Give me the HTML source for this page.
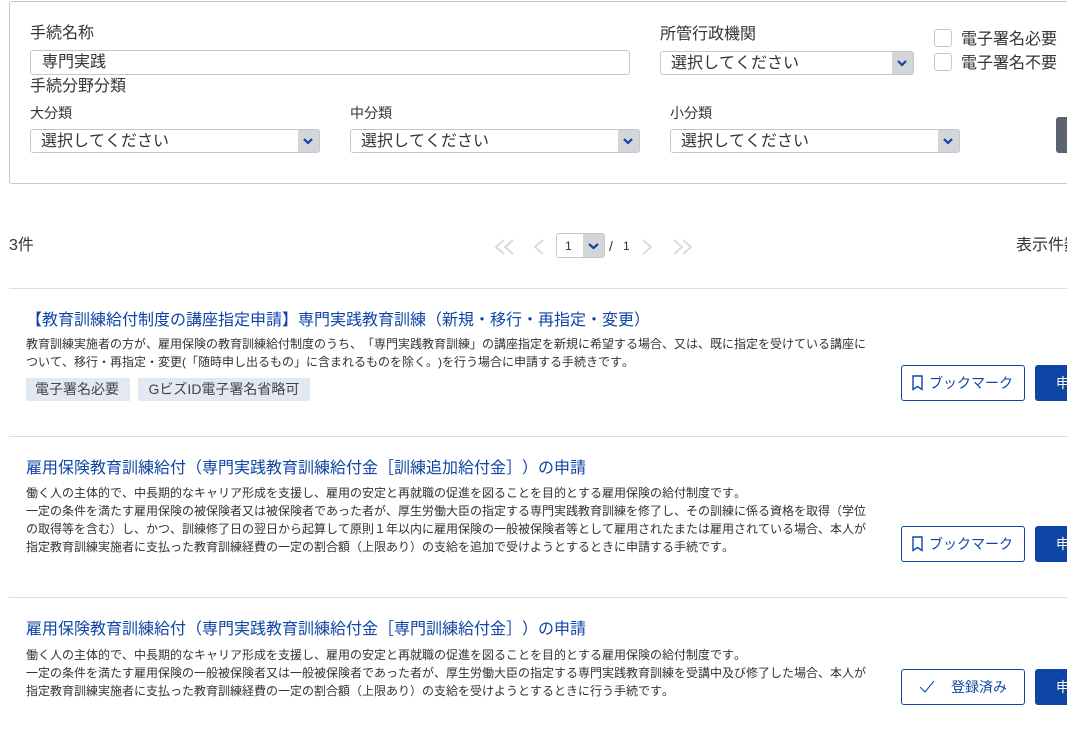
<!DOCTYPE html>
<html lang="ja"><head><meta charset="utf-8"><title>手続検索</title>
<style>
html,body{margin:0;padding:0;background:#fff}
#p{position:relative;width:1067px;height:737px;overflow:hidden;background:#fff;font-family:"Liberation Sans","Noto Sans CJK JP",sans-serif;color:#333;text-spacing-trim:space-all;font-kerning:none}
.t{position:absolute;white-space:nowrap;line-height:20px;font-size:16px}
.s{font-size:14px}
.d{font-size:12px;line-height:18px}
.a{color:#0f46a5}
.box{position:absolute;box-sizing:border-box;border:1px solid #c6c6d2;border-radius:3px;background:#fff}
.sel{height:24px;overflow:hidden;font-size:16px;line-height:23px;padding-left:10px;white-space:nowrap}
.sel i{position:absolute;right:0;top:0;bottom:0;width:21px;background:#d4d5d8}
.sel svg{position:absolute;right:5px;top:7px}
.hr{position:absolute;left:9px;right:0;height:1px;background:#dcdcdc}
.tag{position:absolute;height:23px;background:#e3e9f3;font-size:14px;line-height:23px;text-align:center;white-space:nowrap;color:#444}
.btn{position:absolute;box-sizing:border-box;left:901px;width:124px;height:36px;border:1px solid #0f46a5;border-radius:3px;color:#0f46a5;font-size:14px;line-height:35px;background:#fff;white-space:nowrap}
.go{position:absolute;left:1035px;width:60px;height:36px;background:#0f46a5;border-radius:3px;color:#fff;font-size:14px;line-height:36px;padding-left:21px;box-sizing:border-box;white-space:nowrap}
</style></head><body><div id="p">

<div class="box" style="left:9px;top:1px;width:1100px;height:183px;border-color:#c8c8d4"></div>

<div class="t" style="left:30px;top:24px">手続名称</div>
<div class="box" style="left:30px;top:50px;width:600px;height:25px;font-size:16px;line-height:23px;padding-left:11px">専門実践</div>
<div class="t" style="left:30px;top:77px">手続分野分類</div>

<div class="t" style="left:660px;top:25px">所管行政機関</div>
<div class="box sel" style="left:660px;top:51px;width:254px">選択してください<i></i><svg width="12" height="9" viewBox="0 0 12 9"><path d="M2 2l4 4 4-4" fill="none" stroke="#0f46a5" stroke-width="2.2"/></svg></div>

<div class="box" style="left:934px;top:29px;width:18px;height:18px"></div>
<div class="box" style="left:934px;top:53px;width:18px;height:18px"></div>
<div class="t" style="left:961px;top:30px">電子署名必要</div>
<div class="t" style="left:961px;top:54px">電子署名不要</div>

<div class="t s" style="left:30px;top:103px">大分類</div>
<div class="t s" style="left:350px;top:103px">中分類</div>
<div class="t s" style="left:670px;top:103px">小分類</div>
<div class="box sel" style="left:30px;top:129px;width:290px">選択してください<i></i><svg width="12" height="9" viewBox="0 0 12 9"><path d="M2 2l4 4 4-4" fill="none" stroke="#0f46a5" stroke-width="2.2"/></svg></div>
<div class="box sel" style="left:350px;top:129px;width:290px">選択してください<i></i><svg width="12" height="9" viewBox="0 0 12 9"><path d="M2 2l4 4 4-4" fill="none" stroke="#0f46a5" stroke-width="2.2"/></svg></div>
<div class="box sel" style="left:670px;top:129px;width:290px">選択してください<i></i><svg width="12" height="9" viewBox="0 0 12 9"><path d="M2 2l4 4 4-4" fill="none" stroke="#0f46a5" stroke-width="2.2"/></svg></div>
<div style="position:absolute;left:1056px;top:117px;width:40px;height:36px;background:#5b6270;border-radius:3px"></div>

<div class="t" style="left:9px;top:236px">3件</div>
<svg style="position:absolute;left:490px;top:235px" width="210" height="24" viewBox="0 0 210 24" fill="none" stroke="#d3d8d8" stroke-width="1.8">
<path d="M14 5l-8 7 8 7M23 5l-8 7 8 7"/>
<path d="M53 5l-8 7 8 7"/>
<path d="M153 5l8 7-8 7"/>
<path d="M184 5l8 7-8 7M193 5l8 7-8 7"/>
</svg>
<div class="box" style="left:556px;top:233px;width:49px;height:25px;font-size:12px;line-height:24px;padding-left:8px;overflow:hidden">1<i style="position:absolute;right:0;top:0;bottom:0;width:21px;background:#d4d5d8"></i><svg style="position:absolute;right:4px;top:8px" width="13" height="9" viewBox="0 0 13 9"><path d="M2 2l4.500 4 4.500-4" fill="none" stroke="#0f46a5" stroke-width="2.200"/></svg></div>
<div class="t s" style="left:609px;top:236px">/</div>
<div class="t" style="left:623px;top:236px;font-size:12px">1</div>
<div class="t" style="left:1016px;top:236px">表示件数</div>

<div class="hr" style="top:288px"></div>
<div class="t a" style="left:26px;top:311px">【教育訓練給付制度の講座指定申請】専門実践教育訓練（新規・移行・再指定・変更）</div>
<div class="t d" style="left:26px;top:335px">教育訓練実施者の方が、雇用保険の教育訓練給付制度のうち、「専門実践教育訓練」の講座指定を新規に希望する場合、又は、既に指定を受けている講座に<br>ついて、移行・再指定・変更(「随時申し出るもの」に含まれるものを除く。)を行う場合に申請する手続きです。</div>
<div class="tag" style="left:26px;top:378px;width:104px;padding-right:2px;box-sizing:border-box">電子署名必要</div>
<div class="tag" style="left:138px;top:378px;width:172px">GビズID電子署名省略可</div>
<div class="btn" style="top:365px;padding-left:27px"><svg style="position:absolute;left:10px;top:9px" width="12" height="16" viewBox="0 0 12 16"><path d="M1 1h9v13.500l-4.500-3-4.500 3z" fill="none" stroke="#0f46a5" stroke-width="1.400"/></svg>ブックマーク</div>
<div class="go" style="top:365px">申請</div>

<div class="hr" style="top:436px"></div>
<div class="t a" style="left:26px;top:459px">雇用保険教育訓練給付（専門実践教育訓練給付金［訓練追加給付金］）の申請</div>
<div class="t d" style="left:26px;top:484px">働く人の主体的で、中長期的なキャリア形成を支援し、雇用の安定と再就職の促進を図ることを目的とする雇用保険の給付制度です。<br>一定の条件を満たす雇用保険の被保険者又は被保険者であった者が、厚生労働大臣の指定する専門実践教育訓練を修了し、その訓練に係る資格を取得（学位<br>の取得等を含む）し、かつ、訓練修了日の翌日から起算して原則１年以内に雇用保険の一般被保険者等として雇用されたまたは雇用されている場合、本人が<br>指定教育訓練実施者に支払った教育訓練経費の一定の割合額（上限あり）の支給を追加で受けようとするときに申請する手続です。</div>
<div class="btn" style="top:526px;padding-left:27px"><svg style="position:absolute;left:10px;top:9px" width="12" height="16" viewBox="0 0 12 16"><path d="M1 1h9v13.500l-4.500-3-4.500 3z" fill="none" stroke="#0f46a5" stroke-width="1.400"/></svg>ブックマーク</div>
<div class="go" style="top:526px">申請</div>

<div class="hr" style="top:597px"></div>
<div class="t a" style="left:26px;top:620px">雇用保険教育訓練給付（専門実践教育訓練給付金［専門訓練給付金］）の申請</div>
<div class="t d" style="left:26px;top:646px">働く人の主体的で、中長期的なキャリア形成を支援し、雇用の安定と再就職の促進を図ることを目的とする雇用保険の給付制度です。<br>一定の条件を満たす雇用保険の一般被保険者又は一般被保険者であった者が、厚生労働大臣の指定する専門実践教育訓練を受講中及び修了した場合、本人が<br>指定教育訓練実施者に支払った教育訓練経費の一定の割合額（上限あり）の支給を受けようとするときに行う手続です。</div>
<div class="btn" style="top:669px;padding-left:49px"><svg style="position:absolute;left:16px;top:9px" width="18" height="15" viewBox="0 0 18 15"><path d="M2 8l5 5L16 2" fill="none" stroke="#0f46a5" stroke-width="1"/></svg>登録済み</div>
<div class="go" style="top:669px">申請</div>

</div></body></html>
